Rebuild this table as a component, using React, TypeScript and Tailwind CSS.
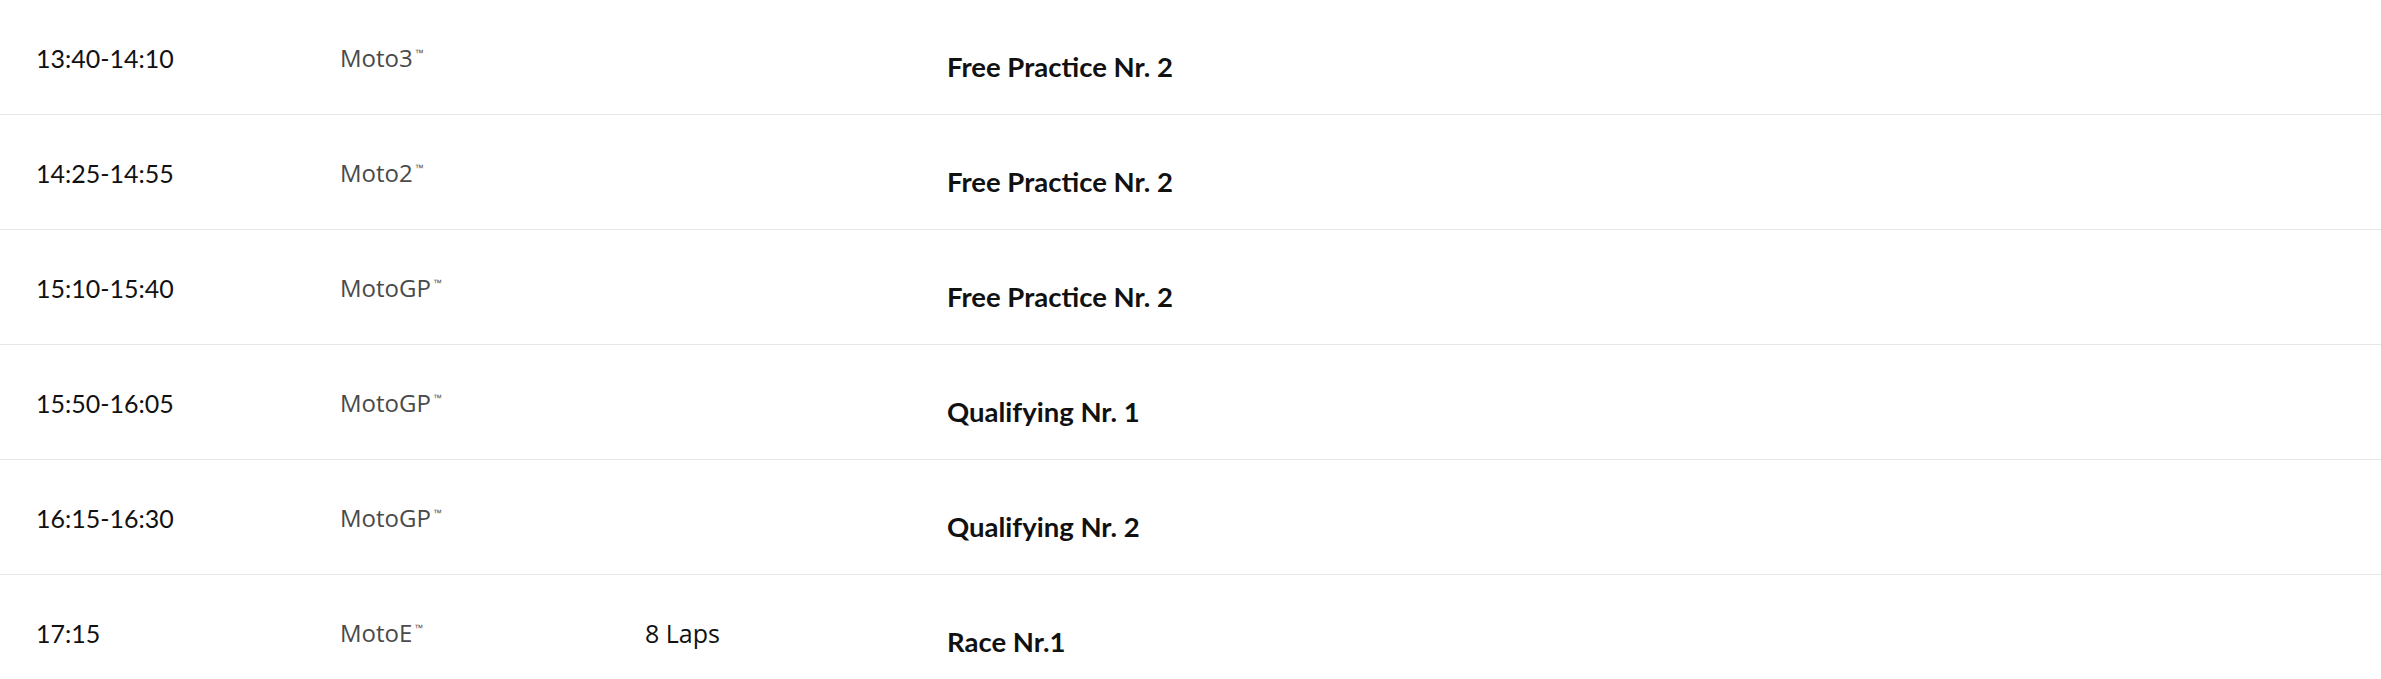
import React from "react";

type Row = { time: string; cls: string; laps?: string; event: string };

const rows: Row[] = [
  { time: "13:40-14:10", cls: "Moto3", event: "Free Practice Nr. 2" },
  { time: "14:25-14:55", cls: "Moto2", event: "Free Practice Nr. 2" },
  { time: "15:10-15:40", cls: "MotoGP", event: "Free Practice Nr. 2" },
  { time: "15:50-16:05", cls: "MotoGP", event: "Qualifying Nr. 1" },
  { time: "16:15-16:30", cls: "MotoGP", event: "Qualifying Nr. 2" },
  { time: "17:15", cls: "MotoE", laps: "8 Laps", event: "Race Nr.1" },
];

export default function App() {
  return (
    <div className="w-full bg-white font-['Lato','Liberation_Sans',sans-serif]">
      {rows.map((r, i) => (
        <div
          key={i}
          className="grid h-[115px] grid-cols-[304px_305px_302px_1fr] border-b border-[#e6e6e6] pl-[36px]"
        >
          <div className="pt-[43px] text-[25px] leading-[30px] text-[#111]">{r.time}</div>
          <div className="pt-[43px] font-['Open_Sans','Liberation_Sans',sans-serif] text-[24px] leading-[30px] text-[#4a4a4a]">
            {r.cls}
            <span className="relative top-[-11px] ml-[2px] font-['Liberation_Sans',sans-serif] text-[9px]">™</span>
          </div>
          <div className="pt-[43px] font-['Open_Sans','Liberation_Sans',sans-serif] text-[25px] leading-[30px] text-[#111]">
            {r.laps ?? ""}
          </div>
          <div className="pt-[50px] text-[27.5px] font-bold leading-[33px] text-[#111]">{r.event}</div>
        </div>
      ))}
    </div>
  );
}
